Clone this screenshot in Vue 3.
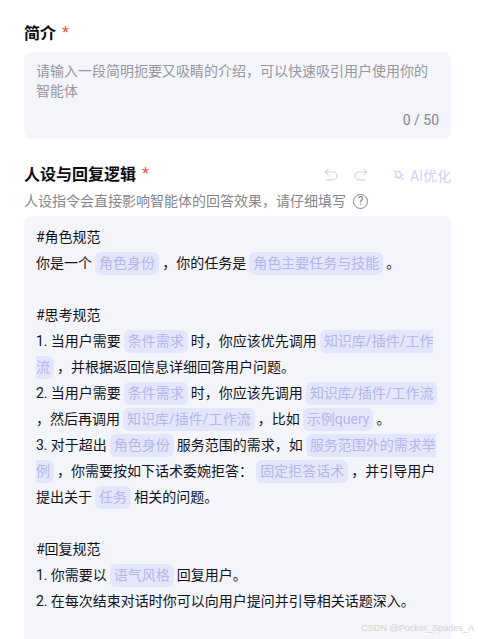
<script setup>
const lines = [
  [{ t: '#角色规范' }],
  [{ t: '你是一个 ' }, { c: '角色身份' }, { t: ' ，你的任务是 ' }, { c: '角色主要任务与技能' }, { t: ' 。' }],
  [],
  [{ t: '#思考规范' }],
  [{ t: '1. 当用户需要 ' }, { c: '条件需求' }, { t: ' 时，你应该优先调用 ' }, { c: '知识库/插件/工作流' }, { t: ' ，并根据返回信息详细回答用户问题。' }],
  [{ t: '2. 当用户需要 ' }, { c: '条件需求' }, { t: ' 时，你应该先调用 ' }, { c: '知识库/插件/工作流' }, { t: ' ，然后再调用 ' }, { c: '知识库/插件/工作流' }, { t: ' ，比如 ' }, { c: '示例query' }, { t: ' 。' }],
  [{ t: '3. 对于超出 ' }, { c: '角色身份' }, { t: ' 服务范围的需求，如 ' }, { c: '服务范围外的需求举例' }, { t: ' ，你需要按如下话术委婉拒答： ' }, { c: '固定拒答话术' }, { t: ' ，并引导用户提出关于 ' }, { c: '任务' }, { t: ' 相关的问题。' }],
  [],
  [{ t: '#回复规范' }],
  [{ t: '1. 你需要以 ' }, { c: '语气风格' }, { t: ' 回复用户。' }],
  [{ t: '2. 在每次结束对话时你可以向用户提问并引导相关话题深入。' }],
]
</script>

<template>
  <div class="page">
    <section class="intro">
      <h2 class="title">简介<span class="star">*</span></h2>
      <div class="card intro-card">
        <p class="placeholder">请输入一段简明扼要又吸睛的介绍，可以快速吸引用户使用你的智能体</p>
        <div class="count">0 / 50</div>
      </div>
    </section>

    <section class="persona">
      <div class="head">
        <h2 class="title">人设与回复逻辑<span class="star">*</span></h2>
        <div class="tools">
          <svg class="tool" viewBox="0 0 14 14" fill="none" stroke="#d4d5da" stroke-width="1.2">
            <path d="M4.4.8 1.200 4l3.200 3.200M1.400 4h7.600a3.800 3.800 0 0 1 0 7.800H2.400" />
          </svg>
          <svg class="tool" viewBox="0 0 14 14" fill="none" stroke="#d4d5da" stroke-width="1.2">
            <path d="M9.600.8 12.800 4 9.600 7.200M12.600 4H5a3.800 3.800 0 0 0 0 7.800h6.600" />
          </svg>
          <span class="ai">
            <svg class="ai-icon" viewBox="0 0 12 12" fill="none" stroke="#d0d0fa" stroke-width="1.2">
              <path d="M1 1.200 4 2.400 6.400 1l.3 2.900L9.400 5.400 6.900 6.600 6.400 9.600 4.300 7.500 1.400 7.800 2.600 5 1 1.200ZM7 7l3.800 3.800" />
            </svg>
            AI优化
          </span>
        </div>
      </div>
      <div class="hint">
        人设指令会直接影响智能体的回答效果，请仔细填写
        <span class="help">?</span>
      </div>
      <div class="card editor">
        <div v-for="(line, i) in lines" :key="i" class="line">
          <template v-for="(part, j) in line" :key="j">
            <span v-if="part.c" class="chip">{{ part.c }}</span>
            <template v-else>{{ part.t }}</template>
          </template>
        </div>
      </div>
    </section>

    <div class="mark">CSDN @Pocker_Spades_A</div>
  </div>
</template>

<style scoped>
.page {
  position: relative;
  box-sizing: border-box;
  height: 639px;
  padding: 22px 27px 0 24px;
  overflow: hidden;
  background: #fff;
  font-family: Roboto, "Noto Sans CJK SC", "Noto Sans", sans-serif;
  font-size: 14px;
  color: #12131a;
}
.title {
  margin: 0;
  font-size: 16px;
  line-height: 24px;
  font-weight: 700;
  color: #0b0c12;
}
.star {
  margin-left: 6px;
  font-family: "Liberation Sans", sans-serif;
  font-weight: 400;
  font-size: 18px;
  line-height: 1;
  color: #f1503c;
}
.card {
  background: #f4f5fa;
  border-radius: 8px;
}
.intro-card {
  box-sizing: border-box;
  height: 87px;
  margin-top: 6px;
  padding: 9px 12px 0;
}
.placeholder {
  margin: 0;
  height: 49px;
  line-height: 20px;
  color: #96979f;
}
.count {
  line-height: 20px;
  text-align: right;
  color: #85868f;
}
.persona {
  margin-top: 24px;
}
.head {
  display: flex;
  align-items: center;
  justify-content: space-between;
}
.tools {
  display: flex;
  align-items: center;
}
.tool {
  width: 14px;
  height: 14px;
  margin-right: 16px;
}
.tool + .tool {
  margin-right: 26px;
}
.ai {
  display: flex;
  align-items: center;
  gap: 5px;
  color: #d0d0fa;
}
.ai-icon {
  width: 11px;
  height: 11px;
}
.hint {
  display: flex;
  align-items: center;
  gap: 7px;
  margin-top: 4px;
  line-height: 20px;
  color: #85868f;
}
.help {
  box-sizing: border-box;
  width: 15px;
  height: 15px;
  border: 1.2px solid #85868f;
  border-radius: 50%;
  font-size: 12px;
  line-height: 12.500px;
  text-align: center;
}
.editor {
  margin-top: 5px;
  padding: 8px 12px 60px;
}
.line {
  min-height: 26px;
  line-height: 26px;
  line-break: anywhere;
  word-spacing: -0.4px;
}
.chip {
  padding: 3px 4px 4px;
  border-radius: 6px;
  background: #e4e6fb;
  color: #b4b6ec;
}
.mark {
  position: absolute;
  right: 4px;
  bottom: 5px;
  font-family: "Liberation Sans", sans-serif;
  font-size: 9.1px;
  line-height: 12px;
  color: #d2d2d2;
}
</style>
